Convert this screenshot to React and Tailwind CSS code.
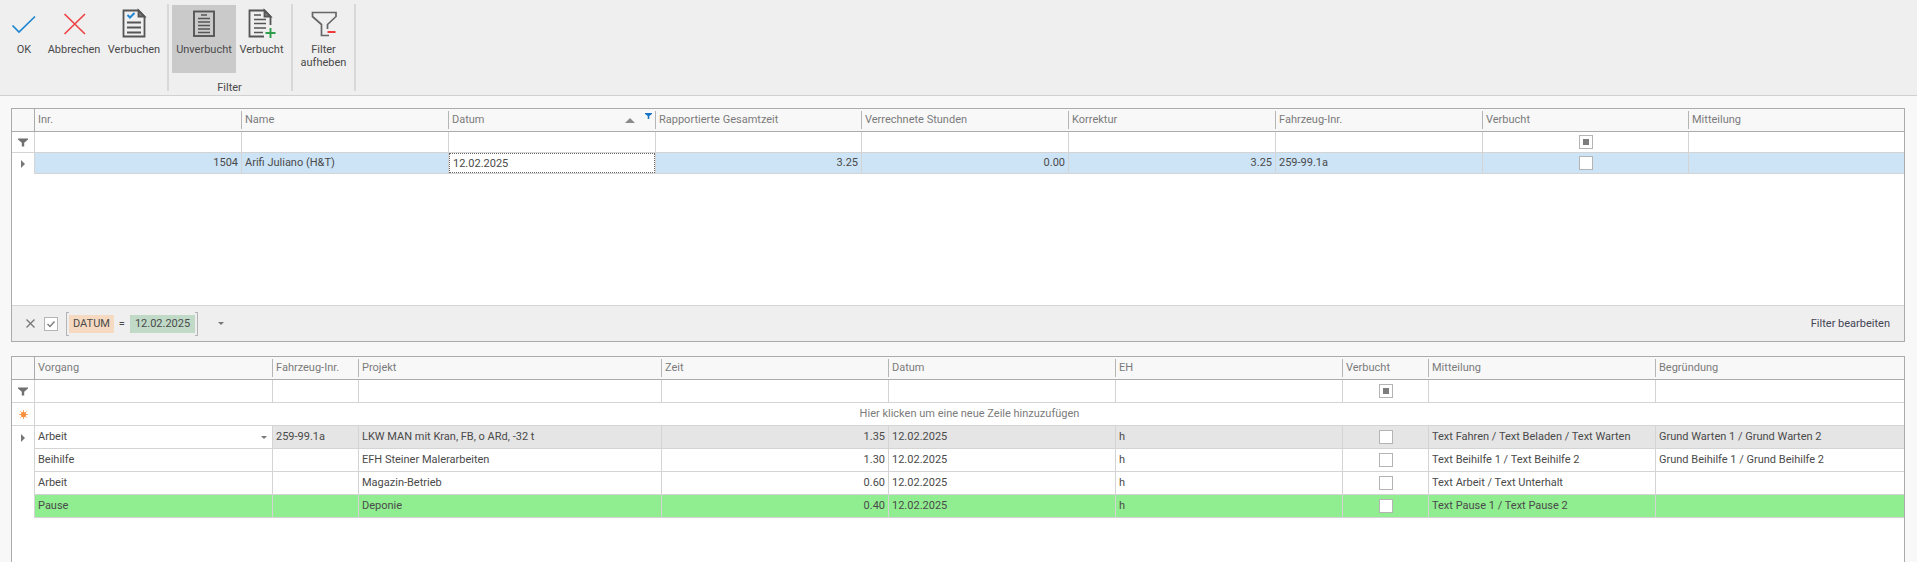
import React from "react";

const CheckIcon = () => (
  <svg width="32" height="32" viewBox="0 0 32 32" fill="none" stroke="#1f86d1" strokeWidth="1.7">
    <path d="M4.500 18.500 L11 25 L27 9.500" />
  </svg>
);

const CrossIcon = () => (
  <svg width="32" height="32" viewBox="0 0 32 32" fill="none" stroke="#ef4444" strokeWidth="1.7">
    <path d="M6.500 7 L27 27 M27 7 L6.500 27" />
  </svg>
);

const DocCheckIcon = () => (
  <svg width="32" height="32" viewBox="0 0 32 32" fill="none" stroke="#555" strokeWidth="1.8">
    <path d="M5.500 3.500 H20.500 L26.500 9.500 V29.500 H5.500 Z" />
    <path d="M20.500 3.500 V9.500 H26.500 Z" fill="#8a8a8a" />
    <path d="M9 15.500 H23 M9 20.500 H23 M9 25.500 H23" />
    <path d="M9.500 8 L12 10.500 L16.500 6" stroke="#1f86d1" strokeWidth="2" />
  </svg>
);

const ListIcon = () => (
  <svg width="32" height="32" viewBox="0 0 32 32" fill="none" stroke="#555" strokeWidth="1.5">
    <rect x="6" y="4.500" width="20" height="24.500" strokeWidth="1.900" />
    <path d="M13 8 H19 M10 11.500 H22 M10 15 H22 M10 18.500 H22 M10 22 H22 M10 25.500 H22" />
  </svg>
);

const DocPlusIcon = () => (
  <svg width="32" height="32" viewBox="0 0 32 32" fill="none" stroke="#555" strokeWidth="1.8">
    <path d="M18 29.500 H3.500 V3.500 H18.500 L24.500 9.500 V18" />
    <path d="M18.500 3.500 V9.500 H24.500 Z" fill="#8a8a8a" />
    <path d="M8 8 H15 M8 12.500 H20 M8 16.500 H20 M8 21 H20 M8 25.500 H17" strokeWidth="1.5" />
    <path d="M24.500 21 V31 M19.500 26 H29.500" stroke="#2f9e4a" strokeWidth="1.900" />
  </svg>
);

const FunnelMinusIcon = () => (
  <svg width="32" height="32" viewBox="0 0 32 32" fill="none" stroke="#666" strokeWidth="1.7">
    <path d="M21 28.500 H13.500 V17.500 L4.500 9.500 V5.500 H28 V9.500 L19.500 17.500 V22" />
    <path d="M19.500 25 H27.500" stroke="#ef3b3b" strokeWidth="2" />
  </svg>
);

const FunnelGlyph = () => (
  <svg className="mx-auto block" width="10" height="9" viewBox="0 0 10 9" fill="#707070">
    <path d="M0 0.500 H10 V1.500 L6.200 4.800 V8.500 H3.800 V4.800 L0 1.500 Z" />
  </svg>
);

const RowMarker = () => (
  <svg className="mx-auto block" width="4" height="8" viewBox="0 0 4 8" fill="#777">
    <path d="M0 0 L4 4 L0 8 Z" />
  </svg>
);

const NewRowMarker = () => (
  <svg className="mx-auto block" width="9" height="9" viewBox="0 0 9 9">
    <circle cx="4.500" cy="4.500" r="2.600" fill="#fa8f3c" />
    <path d="M4.500 0 V9 M0 4.500 H9 M1.300 1.300 L7.700 7.700 M7.700 1.300 L1.300 7.700" stroke="#fa8f3c" strokeWidth="0.8" />
  </svg>
);

const DownArrow = () => (
  <svg width="6" height="3" viewBox="0 0 6 3" fill="#777">
    <path d="M0 0 H6 L3 3 Z" />
  </svg>
);

function RibbonButton({ icon, label, width, pressed }) {
  return (
    <button
      type="button"
      aria-pressed={pressed}
      className={`flex h-[68px] flex-col items-center pt-0.5 ${width} ${pressed ? "bg-[#cacaca]" : ""}`}
    >
      {icon}
      <span className="mt-1 leading-[13px]">{label}</span>
    </button>
  );
}

function RibbonGroup({ caption, className, children }) {
  return (
    <div className={`flex h-[87px] flex-col border-r-2 border-[#d8d8d8] pt-px ${className}`}>
      <div className="flex">{children}</div>
      {caption && <div className="mt-2 text-center leading-[13px]">{caption}</div>}
    </div>
  );
}

function CheckBox({ label, state }) {
  return (
    <span className="relative mx-auto block h-3.5 w-3.5">
      <input
        type="checkbox"
        aria-label={label}
        defaultChecked={state === "checked"}
        className="block h-3.5 w-3.5 appearance-none border border-[#b4b4b4] bg-white"
      />
      {state === "mixed" && (
        <span className="pointer-events-none absolute inset-1 bg-[#7d7d7d]" />
      )}
      {state === "checked" && (
        <svg className="pointer-events-none absolute inset-0" width="14" height="14" viewBox="0 0 14 14" fill="none" stroke="#7d7d7d" strokeWidth="1.4">
          <path d="M3.500 7 L6 9.500 L10.500 4.500" />
        </svg>
      )}
    </span>
  );
}

function HeaderCells({ columns }) {
  return (
    <tr className="bg-[#f8f8f8] text-[#7b7b7b]">
      <th aria-label="Zeilenstatus" className="h-[23px] border-r border-b border-[#ababab]" />
      {columns.map((c, i) => (
        <th key={c.name} scope="col" className="h-[23px] border-b border-[#ababab] p-0 text-left font-normal">
          <div className={`flex h-[18px] items-center pl-[3px] ${i < columns.length - 1 ? "border-r border-[#b5b5b5]" : ""}`}>
            <span className="grow truncate">{c.name}</span>
            {c.sorted && (
              <>
                <svg className="mr-2.5" width="10" height="5" viewBox="0 0 10 5" fill="#8a8a8a">
                  <path d="M5 0 L10 5 H0 Z" />
                </svg>
                <svg className="mr-[3px] mb-2" width="7" height="6" viewBox="0 0 7 6" fill="#1673c5">
                  <path d="M0 0 H7 V1 L4.300 3 V6 H2.700 V3 L0 1 Z" />
                </svg>
              </>
            )}
          </div>
        </th>
      ))}
    </tr>
  );
}

function FilterRow({ columns, height }) {
  return (
    <tr>
      <td className={`border-r border-b border-[#d4d4d4] p-0 ${height}`}>
        <FunnelGlyph />
      </td>
      {columns.map((c, i) => (
        <td key={c.name} className={`border-b border-[#d4d4d4] p-0 ${i < columns.length - 1 ? "border-r" : ""}`}>
          {c.check ? (
            <CheckBox label={`Filter ${c.name}`} state="mixed" />
          ) : (
            <input type="text" aria-label={`Filter ${c.name}`} className="block h-4 w-full bg-transparent px-[3px] outline-none" />
          )}
        </td>
      ))}
    </tr>
  );
}

function Columns({ columns }) {
  return (
    <colgroup>
      <col className="w-[23px]" />
      {columns.map((c, i) => (
        <col key={c.name} className={c.width} />
      ))}
    </colgroup>
  );
}

const topColumns = [
  { name: "Inr.", width: "w-[207px]" },
  { name: "Name", width: "w-[207px]" },
  { name: "Datum", width: "w-[207px]", sorted: true },
  { name: "Rapportierte Gesamtzeit", width: "w-[206px]" },
  { name: "Verrechnete Stunden", width: "w-[207px]" },
  { name: "Korrektur", width: "w-[207px]" },
  { name: "Fahrzeug-Inr.", width: "w-[207px]" },
  { name: "Verbucht", width: "w-[206px]", check: true },
  { name: "Mitteilung", width: "w-[215px]" },
];

const bottomColumns = [
  { name: "Vorgang", width: "w-[238px]" },
  { name: "Fahrzeug-Inr.", width: "w-[86px]" },
  { name: "Projekt", width: "w-[303px]" },
  { name: "Zeit", width: "w-[227px]" },
  { name: "Datum", width: "w-[227px]" },
  { name: "EH", width: "w-[227px]" },
  { name: "Verbucht", width: "w-[86px]", check: true },
  { name: "Mitteilung", width: "w-[227px]" },
  { name: "Begründung", width: "w-[248px]" },
];

const entries = [
  { task: "Arbeit", vehicle: "259-99.1a", project: "LKW MAN mit Kran, FB, o ARd, -32 t", time: "1.35", note: "Text Fahren / Text Beladen / Text Warten", reason: "Grund Warten 1 / Grund Warten 2", bg: "bg-[#e5e5e5]", current: true },
  { task: "Beihilfe", vehicle: "", project: "EFH Steiner Malerarbeiten", time: "1.30", note: "Text Beihilfe 1 / Text Beihilfe 2", reason: "Grund Beihilfe 1 / Grund Beihilfe 2", bg: "" },
  { task: "Arbeit", vehicle: "", project: "Magazin-Betrieb", time: "0.60", note: "Text Arbeit / Text Unterhalt", reason: "", bg: "" },
  { task: "Pause", vehicle: "", project: "Deponie", time: "0.40", note: "Text Pause 1 / Text Pause 2", reason: "", bg: "bg-[#90ee90]" },
];

const cell = "border-r border-b border-[#d4d4d4] px-[3px] py-0 truncate";
const numCell = "border-r border-b border-[#d4d4d4] px-[3px] py-0 text-right";
const lastCell = "border-b border-[#d4d4d4] px-[3px] py-0 truncate";

function TopGrid() {
  return (
    <section className="border border-[#ababab] bg-white">
      <div className="min-h-[196px]">
        <table className="w-full table-fixed border-separate border-spacing-0">
          <Columns columns={topColumns} />
          <thead>
            <HeaderCells columns={topColumns} />
          </thead>
          <tbody>
            <FilterRow columns={topColumns} height="h-[21px]" />
            <tr className="bg-[#cde4f6]">
              <td className="h-[21px] border-r border-[#d4d4d4] bg-white p-0">
                <RowMarker />
              </td>
              <td className={numCell}>1504</td>
              <td className={cell}>Arifi Juliano (H&amp;T)</td>
              <td className="border-r border-b border-[#d4d4d4] p-0">
                <input
                  type="text"
                  aria-label="Datum"
                  defaultValue="12.02.2025"
                  className="block h-5 w-full border border-dotted border-[#666] bg-white px-[3px] outline-none"
                />
              </td>
              <td className={numCell}>3.25</td>
              <td className={numCell}>0.00</td>
              <td className={numCell}>3.25</td>
              <td className={cell}>259-99.1a</td>
              <td className={cell}>
                <CheckBox label="Verbucht" />
              </td>
              <td className={lastCell} />
            </tr>
          </tbody>
        </table>
      </div>
      <div className="flex h-9 items-center border-t border-[#d4d4d4] bg-[#efefef] px-3.5">
        <button type="button" aria-label="Filter löschen">
          <svg width="9" height="9" viewBox="0 0 9 9" fill="none" stroke="#777" strokeWidth="1.300">
            <path d="M0.500 0.500 L8.500 8.500 M8.500 0.500 L0.500 8.500" />
          </svg>
        </button>
        <div className="ml-[9px]">
          <CheckBox label="Filter aktiv" state="checked" />
        </div>
        <div className="ml-2 flex h-6 items-center">
          <span className="h-6 w-[3px] border border-r-0 border-[#b4b4b4]" />
          <button type="button" className="h-[18px] bg-[#f5d9c1] px-1">DATUM</button>
          <span className="w-4 text-center">=</span>
          <button type="button" className="h-[18px] bg-[#c0dac7] px-[5px]">12.02.2025</button>
          <span className="h-6 w-[3px] border border-l-0 border-[#b4b4b4]" />
        </div>
        <button type="button" aria-label="Letzte Filter" className="ml-5">
          <DownArrow />
        </button>
        <button type="button" className="ml-auto text-[#444455]">Filter bearbeiten</button>
      </div>
    </section>
  );
}

function BottomGrid() {
  return (
    <section className="mt-3.5 grow border border-b-0 border-[#ababab] bg-white">
      <table className="w-full table-fixed border-separate border-spacing-0">
        <Columns columns={bottomColumns} />
        <thead>
          <HeaderCells columns={bottomColumns} />
        </thead>
        <tbody>
          <FilterRow columns={bottomColumns} height="h-[23px]" />
          <tr>
            <td className="h-[23px] border-r border-b border-[#d4d4d4] p-0">
              <NewRowMarker />
            </td>
            <td colSpan={9} className="border-b border-[#d4d4d4] p-0 text-center text-[#7b7b7b]">
              Hier klicken um eine neue Zeile hinzuzufügen
            </td>
          </tr>
          {entries.map((e) => (
            <tr key={e.project} className={e.bg}>
              <td className="h-[23px] border-r border-[#d4d4d4] bg-white p-0">{e.current && <RowMarker />}</td>
              {e.current ? (
                <td className="border-r border-b border-[#d4d4d4] bg-white p-0">
                  <div className="flex items-center pr-[5px]">
                    <select aria-label="Vorgang" defaultValue={e.task} className="h-5 grow appearance-none bg-transparent px-[3px] outline-none">
                      <option>Arbeit</option>
                      <option>Beihilfe</option>
                      <option>Pause</option>
                    </select>
                    <DownArrow />
                  </div>
                </td>
              ) : (
                <td className={cell}>{e.task}</td>
              )}
              <td className={cell}>{e.vehicle}</td>
              <td className={cell}>{e.project}</td>
              <td className={numCell}>{e.time}</td>
              <td className={cell}>12.02.2025</td>
              <td className={cell}>h</td>
              <td className={cell}>
                <CheckBox label={`Verbucht ${e.project}`} />
              </td>
              <td className={cell}>{e.note}</td>
              <td className={lastCell}>{e.reason}</td>
            </tr>
          ))}
        </tbody>
      </table>
    </section>
  );
}

export default function App() {
  return (
    <div className="flex h-screen flex-col overflow-hidden bg-[#f8f8f8] font-[Roboto,sans-serif] text-[11px] leading-4 text-[#4a4a4a]">
      <header className="flex h-24 shrink-0 border-b border-[#d0d0d0] bg-[#efefef] pt-1">
        <RibbonGroup className="pr-1 pl-[5px]">
          <RibbonButton icon={<CheckIcon />} label="OK" width="w-[38px]" />
          <RibbonButton icon={<CrossIcon />} label="Abbrechen" width="w-[62px]" />
          <RibbonButton icon={<DocCheckIcon />} label="Verbuchen" width="w-[58px]" />
        </RibbonGroup>
        <RibbonGroup className="pr-1 pl-[3px]" caption="Filter">
          <RibbonButton icon={<ListIcon />} label="Unverbucht" width="w-16" pressed />
          <RibbonButton icon={<DocPlusIcon />} label="Verbucht" width="w-[51px]" />
        </RibbonGroup>
        <RibbonGroup className="px-1">
          <RibbonButton icon={<FunnelMinusIcon />} label="Filter aufheben" width="w-[53px]" />
        </RibbonGroup>
      </header>
      <main className="flex grow flex-col pt-3 pr-3 pl-[11px]">
        <TopGrid />
        <BottomGrid />
      </main>
    </div>
  );
}
